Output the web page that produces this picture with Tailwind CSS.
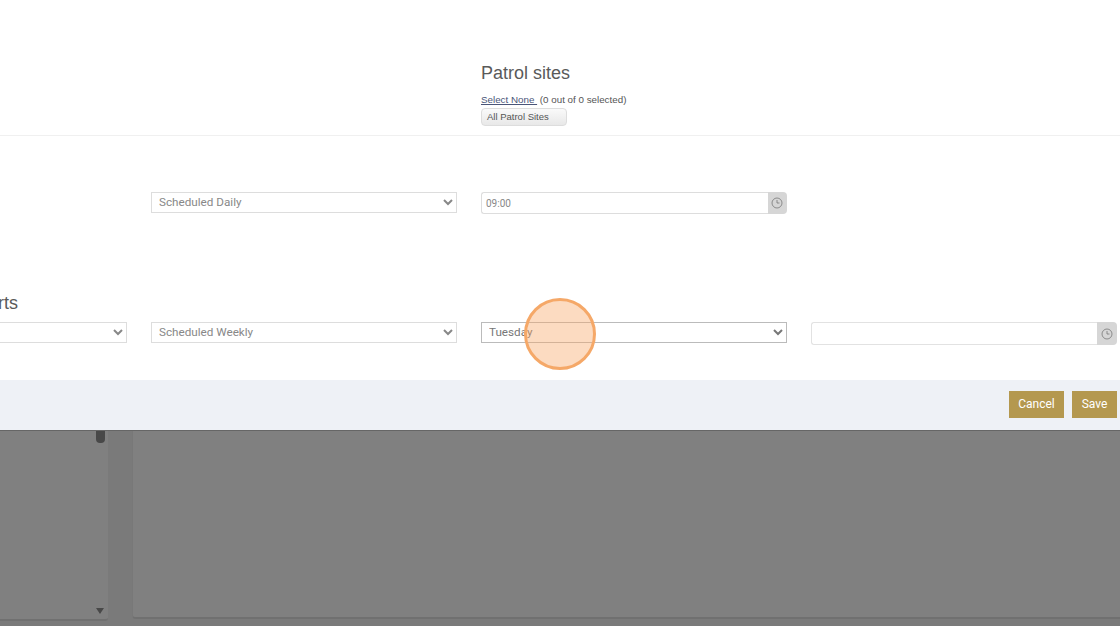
<!DOCTYPE html>
<html lang="en">
<head>
  <meta charset="UTF-8">
  <meta name="viewport" content="width=device-width, initial-scale=1.0">
  <title>Patrol sites</title>
  <script src="https://cdn.jsdelivr.net/npm/@tailwindcss/browser@4"></script>
</head>
<body class="relative h-[626px] w-[1120px] overflow-hidden bg-white font-['Liberation_Sans',sans-serif]">

  <!-- modal body -->
  <div class="h-[380px] overflow-hidden bg-white">
    <!-- patrol sites header -->
    <div class="h-[136px] border-b border-[#f0f0f0] pl-[481px] pt-[62px]">
      <h3 class="text-[18px] leading-[22px] text-[#5a5a5a]">Patrol sites</h3>
      <p class="mt-[10px] h-[12px] text-[9.8px] leading-[12px] text-[#555]"><a class="text-[#4a5578] underline" href="#">Select None&nbsp;</a> (0 out of 0 selected)</p>
      <button class="mt-[2px] flex h-[18px] w-[86px] items-center rounded-[4px] border border-[#ddd] bg-gradient-to-b from-[#fafafa] to-[#e8e8e8] pl-[5px] text-[9.5px] text-[#555]">All Patrol Sites</button>
    </div>

    <!-- daily row -->
    <div class="ml-[151px] mt-[56px] flex h-[22px] gap-[24.5px]">
      <select class="h-[21px] w-[305.5px] border border-[#ddd] bg-white pb-[2px] pl-[3px] font-['Roboto',sans-serif] text-[11.7px] text-[#888]">
        <option>Scheduled Daily</option>
      </select>
      <div class="flex h-[22px] w-[305.5px]">
        <div class="flex flex-1 items-center rounded-l-[3px] border border-r-0 border-[#ddd] pl-[4px] font-['Roboto',sans-serif] text-[10px] text-[#888]">09:00</div>
        <div class="flex w-[19px] items-center justify-center rounded-r-[4px] bg-[#d6d6d6]">
          <svg class="h-[12px] w-[12px] text-[#777]" viewBox="0 0 24 24" fill="none" stroke="currentColor" stroke-width="1.6"><circle cx="12" cy="12" r="10"/><path d="M12 6v6h5"/></svg>
        </div>
      </div>
    </div>

    <!-- weekly row -->
    <h3 class="-ml-[2px] mt-[78px] h-[22px] text-[18px] leading-[22px] text-[#5a5a5a]">rts</h3>
    <div class="ml-[-179px] mt-[8px] flex h-[23px] gap-[24.5px]">
      <select class="h-[21px] w-[305.5px] border border-[#ddd] bg-white font-['Roboto',sans-serif] text-[11.7px] text-[#888]"><option></option></select>
      <select class="h-[21px] w-[305.5px] border border-[#ddd] bg-white pb-[1px] pl-[3px] font-['Roboto',sans-serif] text-[11.7px] text-[#888]">
        <option>Scheduled Weekly</option>
      </select>
      <select class="h-[21px] w-[305.5px] border border-[#bbb] bg-white pb-[1px] pl-[3px] font-['Roboto',sans-serif] text-[11.7px] text-[#777]">
        <option>Tuesday</option>
      </select>
      <div class="flex h-[23px] w-[306px]">
        <div class="flex-1 rounded-l-[3px] border border-r-0 border-[#e2e2e2]"></div>
        <div class="flex w-[20px] items-center justify-center rounded-r-[4px] bg-[#d6d6d6]">
          <svg class="h-[12px] w-[12px] text-[#777]" viewBox="0 0 24 24" fill="none" stroke="currentColor" stroke-width="1.6"><circle cx="12" cy="12" r="10"/><path d="M12 6v6h5"/></svg>
        </div>
      </div>
    </div>
  </div>

  <!-- footer -->
  <div class="flex h-[50px] items-center justify-end gap-[8px] bg-[#eef1f6] pr-[3px] pb-[2px]">
    <button class="h-[27px] w-[55px] bg-[#b4984f] pb-[1px] font-['Roboto',sans-serif] text-[12px] text-white">Cancel</button>
    <button class="h-[27px] w-[45px] bg-[#b4984f] pb-[1px] font-['Roboto',sans-serif] text-[12px] text-white">Save</button>
  </div>

  <!-- dimmed page behind the modal -->
  <div class="flex h-[196px] border-t border-[#666] bg-[#7a7a7a]">
    <div class="relative h-[190px] w-[108px] rounded-br-[3px] border-b-2 border-[#707070] bg-[#808080]">
      <div class="absolute left-[96px] top-0 h-[12px] w-[9px] rounded-b-[4px] bg-[#484848]"></div>
      <div class="absolute left-[96px] top-[177px] h-0 w-0 border-x-[4.5px] border-t-[6px] border-x-transparent border-t-[#484848]"></div>
    </div>
    <div class="ml-[24px] h-[188px] flex-1 rounded-bl-[4px] border-b-2 border-l border-[#787878] border-b-[#707070] bg-[#808080]"></div>
  </div>

  <!-- click highlight -->
  <div class="absolute left-[524px] top-[298px] h-[72px] w-[72px] rounded-full border-[3px] border-[#f5a868] bg-[#f8a565]/40"></div>

</body>
</html>
